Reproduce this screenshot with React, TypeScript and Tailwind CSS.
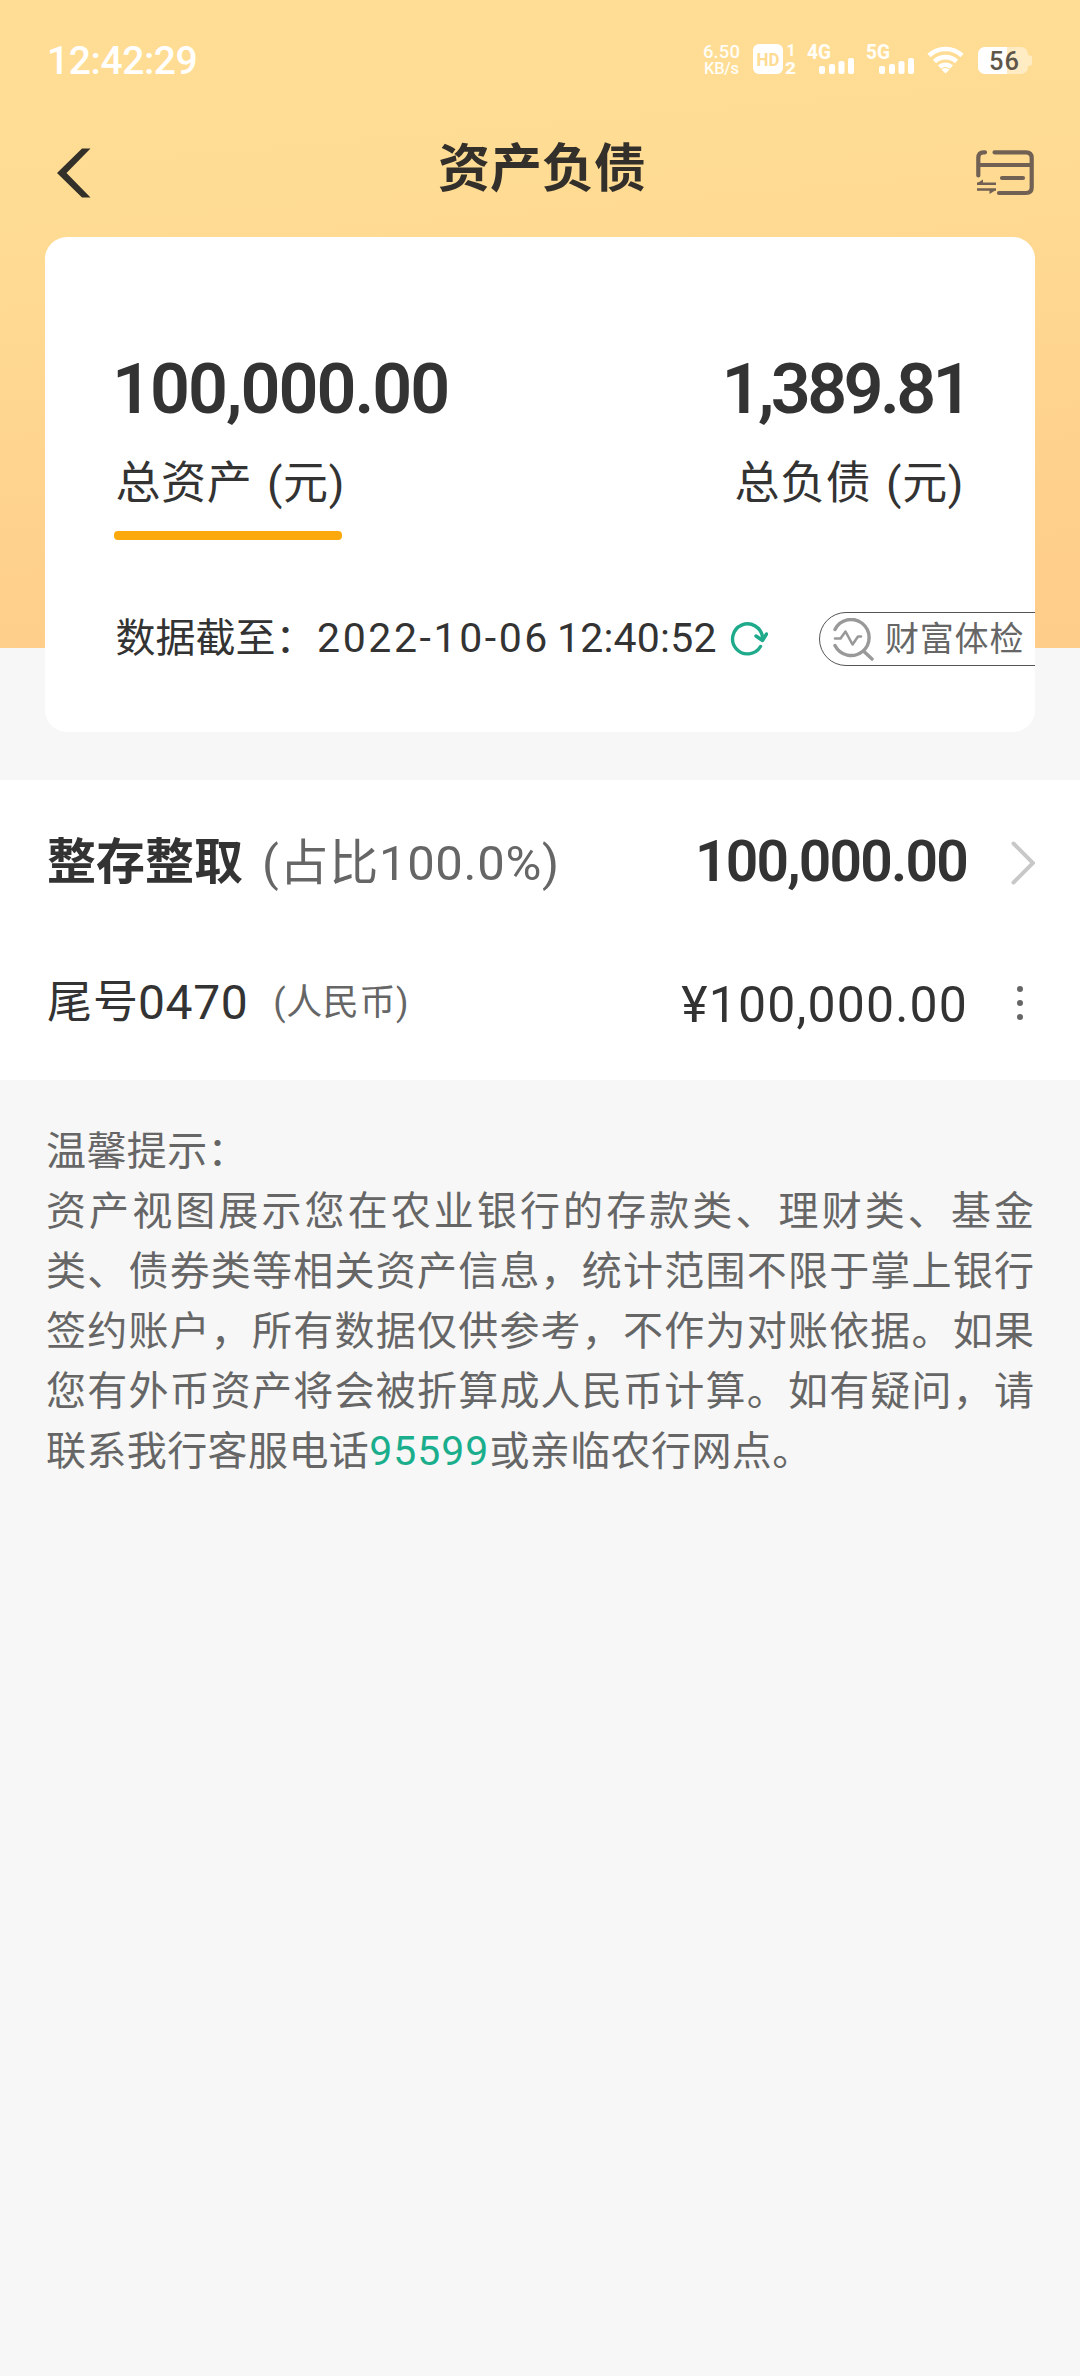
function StatusBar() {
  return (
    <div className="flex h-[118px] items-center justify-between pl-[47px] pr-[48px] text-white">
      <div className="mt-[5px] text-[39px] font-medium leading-none tracking-[-0.400px]">12:42:29</div>
      <svg width="330" height="40" viewBox="702 38 330 40" className="block" fill="#fff">
        <g fontFamily="Roboto" fill="#fffdf5">
          <text x="703" y="56.500" fontSize="18.500" fontWeight="500" textLength="37">6.50</text>
          <text x="704" y="73" fontSize="16.500" fontWeight="500" textLength="35">KB/s</text>
          <text x="786.500" y="55" fontSize="16" fontWeight="700">1</text>
          <text x="785" y="72.500" fontSize="17" fontWeight="800" textLength="11" lengthAdjust="spacingAndGlyphs">2</text>
          <text x="807" y="57.500" fontSize="20.500" fontWeight="800" textLength="24" lengthAdjust="spacingAndGlyphs">4G</text>
          <text x="866" y="57.500" fontSize="20.500" fontWeight="800" textLength="24" lengthAdjust="spacingAndGlyphs">5G</text>
        </g>
        <rect x="753" y="43" width="30" height="30" rx="6" />
        <text x="756.500" y="64.500" fontFamily="Roboto" fontSize="19" fontWeight="700" fill="#ffdc93" textLength="23" lengthAdjust="spacingAndGlyphs">HD</text>
        {[819, 879].map((x) => (
          <g key={x}>
            <rect x={x} y="65" width="6" height="8" rx="2" />
            <rect x={x + 10} y="63" width="6" height="10" rx="2" />
            <rect x={x + 19.5} y="60" width="6" height="13" rx="2" />
            <rect x={x + 29} y="57" width="6" height="16" rx="2" />
          </g>
        ))}
        <g fill="none" stroke="#fff" strokeWidth="4.600">
          <path d="M929 54.500a24 24 0 0 1 33 0" />
          <path d="M934.500 60.500a16 16 0 0 1 22 0" />
          <path d="M939.500 66a9 9 0 0 1 12 0" />
        </g>
        <path d="M941.500 68.500a6 6 0 0 1 8 0l-4 4z" />
        <rect x="978" y="46" width="50" height="27" rx="7" fill="#fff" fillOpacity="0.45" />
        <path d="M1028 54a5 5 0 0 1 0 11z" fillOpacity="0.45" />
        <path d="M985 46h22v27h-22a7 7 0 0 1-7-7v-13a7 7 0 0 1 7-7z" />
        <text x="989" y="69" fontFamily="Roboto" fontSize="25.500" fontWeight="500" fill="#5f564a" textLength="30">56</text>
      </svg>
    </div>
  );
}

function NavBar() {
  return (
    <div className="grid h-[119px] grid-cols-[1fr_auto_1fr] items-center pb-[20px] pl-[57px] pr-[46px]">
      <svg width="34" height="50" viewBox="0 0 34 50" className="mt-[11px] block" fill="#33302a">
        <path d="M0 25L25 0.500h8.500L9.500 25l24 24.500H25z" />
      </svg>
      <h1 className="-ml-[7px] mt-[5px] text-[52px] font-bold leading-none text-[#33302b]">资产负债</h1>
      <svg width="58" height="46" viewBox="0 0 58 46" className="mt-[10px] block justify-self-end" fill="none" stroke="#716154" strokeWidth="4.200" strokeLinecap="round">
        <path d="M9 2.300H7.500Q2.300 2.300 2.300 8v17.500M18.500 2.300H50Q55.700 2.300 55.700 8v29.500Q55.700 43 50 43H23M3 15h52M26 28h21" />
        <g strokeWidth="2.600" strokeLinecap="butt">
          <path d="M1 33.800h19M1 39.500h19" />
          <path d="M1.500 33l5.500-3.500v4zM19.500 40.200l-6 3.800v-4z" fill="#716154" stroke="none" />
        </g>
      </svg>
    </div>
  );
}

function SummaryCard() {
  return (
    <section className="mx-[45px] h-[495px] overflow-hidden rounded-[22px] bg-white pl-[69px] pt-[112px] text-[#333]">
      <div className="flex justify-between pr-[72px]">
        <div>
          <div className="-ml-[2px] h-[80px] text-[70px] font-semibold leading-[80px] tracking-[-2px]">100,000.00</div>
          <div className="ml-[1.500px] mt-[25px] h-[60px] text-[45px] leading-[60px] tracking-[0.600px] [word-spacing:3px]">总资产 (元)</div>
          <div className="mt-[17px] h-[9px] w-[228px] rounded-[4px] bg-[#fba90c]" />
        </div>
        <div className="text-right">
          <div className="-mr-[6px] h-[80px] text-[70px] font-semibold leading-[80px] tracking-[-3.600px]">1,389.81</div>
          <div className="-mr-[1px] mt-[25px] h-[60px] text-[45px] leading-[60px] tracking-[0.600px] [word-spacing:3px]">总负债 (元)</div>
        </div>
      </div>
      <div className="mt-[72px] flex h-[54px] items-center">
        <div className="w-[203px] shrink-0 whitespace-nowrap pl-[1.500px] text-[40px] leading-[54px]">数据截至：</div>
        <div className="-mt-[2px] flex w-[413px] shrink-0 whitespace-nowrap text-[41px] leading-[54px]">
          <span className="w-[240px] tracking-[2.600px]">2022-10-06</span>
          <span className="tracking-[0.200px]">12:40:52</span>
        </div>
        <svg width="38" height="36" viewBox="0 0 38 36" className="block shrink-0" fill="none" stroke="#1fab8b" strokeWidth="3.400" strokeLinecap="round" strokeLinejoin="round">
          <path d="M30.500 25.500A15 15 0 1 1 32.500 16.500" />
          <path d="M26 15l6.500 4.500 4-6.500" />
        </svg>
        <div className="ml-[51px] flex h-[54px] w-[240px] shrink-0 items-center rounded-l-full border border-[#555] pl-[13px] text-[#666]">
          <svg width="41" height="43" viewBox="0 0 41 43" className="block shrink-0" fill="none" stroke="#999" strokeWidth="3.400" strokeLinecap="round" strokeLinejoin="round">
            <path d="M2 11.500A18 18 0 1 1 2 27.500M31 33.500l8 7.500" />
            <path d="M2 20.500h5.500l5-7 7 13 5.500-8h3" strokeWidth="2.600" />
          </svg>
          <div className="ml-[11px] whitespace-nowrap text-[34px] leading-[50px] tracking-[0.800px]">财富体检</div>
        </div>
      </div>
    </section>
  );
}

function DepositList() {
  return (
    <section className="h-[300px] bg-white text-[#333]">
      <div className="flex h-[166px] items-center pl-[47px] pr-[45px]">
        <div className="text-[49px] font-bold leading-[60px]">整存整取</div>
        <div className="ml-[19px] mt-[2px] text-[49px] leading-[60px] tracking-[0.700px] text-[#666]">(占比100.0%)</div>
        <div className="-mt-[2px] ml-auto text-[57px] font-semibold leading-[60px] tracking-[-1.800px]">100,000.00</div>
        <svg width="24" height="44" viewBox="0 0 24 44" className="ml-[44px] block" fill="none" stroke="#c8c8c8" strokeWidth="4" strokeLinecap="round">
          <path d="M2.500 2.500L22 22 2.500 41.500" />
        </svg>
      </div>
      <div className="flex h-[114px] items-center pl-[47px] pr-[45px]">
        <div className="text-[45px] leading-[60px] tracking-[1px]">尾号</div>
        <div className="-ml-[1px] text-[48px] leading-[60px] tracking-[0.600px]">0470</div>
        <div className="ml-[25px] text-[36px] leading-[60px] tracking-[0.600px] text-[#666]">(人民币)</div>
        <div className="ml-auto mt-[3px] text-[50px] leading-[60px] tracking-[1.150px]">¥100,000.00</div>
        <svg width="6" height="36" viewBox="0 0 6 36" className="ml-[49px] mr-[12px] block" fill="#666">
          <circle cx="3" cy="4" r="3" />
          <circle cx="3" cy="18" r="3" />
          <circle cx="3" cy="32" r="3" />
        </svg>
      </div>
    </section>
  );
}

const tips = [
  "资产视图展示您在农业银行的存款类、理财类、基金",
  "类、债券类等相关资产信息，统计范围不限于掌上银行",
  "签约账户，所有数据仅供参考，不作为对账依据。如果",
  "您有外币资产将会被折算成人民币计算。如有疑问，请",
];

function Tips() {
  return (
    <section className="mx-[46px] pt-[42px] text-[40px] leading-[60px] text-[#666]">
      <p className="tracking-[0.400px]">温馨提示：</p>
      {tips.map((line) => (
        <p key={line} className="whitespace-nowrap [text-align-last:justify]">{line}</p>
      ))}
      <p className="-mt-[1px] whitespace-nowrap tracking-[0.400px]">
        联系我行客服电话<span className="text-[41px] tracking-[1px] text-[#1aae8c]">95599</span>或亲临农行网点。
      </p>
    </section>
  );
}

export default function App() {
  return (
    <main className="h-[2376px] w-[1080px] overflow-hidden bg-[#f7f7f7] font-['Roboto','Noto_Sans_CJK_SC',sans-serif]" lang="zh-CN">
      <header className="h-[780px] bg-[linear-gradient(175deg,#ffdd94_0%,#ffdc93_30%,#fecf8a_85%,#fecd89_100%)] bg-[length:100%_648px] bg-no-repeat">
        <StatusBar />
        <NavBar />
        <SummaryCard />
      </header>
      <DepositList />
      <Tips />
    </main>
  );
}
